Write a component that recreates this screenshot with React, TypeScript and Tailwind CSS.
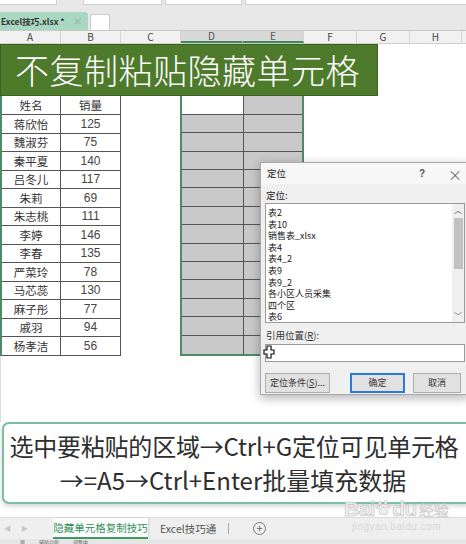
import React from "react";

const rows: [string, string][] = [
  ["蒋欣怡", "125"],
  ["魏淑芬", "75"],
  ["秦平夏", "140"],
  ["吕冬儿", "117"],
  ["朱莉", "69"],
  ["朱志桃", "111"],
  ["李婷", "146"],
  ["李春", "135"],
  ["严菜玲", "78"],
  ["马芯蕊", "130"],
  ["麻子彤", "77"],
  ["戚羽", "94"],
  ["杨孝洁", "56"],
];

const listItems = ["表2", "表10", "销售表_xlsx", "表4", "表4_2", "表9", "表9_2", "各小区人员采集", "四个区", "表6"];

const cols: [string, number][] = [
  ["A", 61],
  ["B", 60],
  ["C", 60],
  ["D", 62],
  ["E", 61],
  ["F", 53],
  ["G", 53],
  ["H", 52],
];

export default function App() {
  return (
    <div
      className="relative w-[466px] h-[544px] overflow-hidden bg-white flex flex-col"
      style={{ fontFamily: '"Noto Sans CJK SC", "Noto Sans", sans-serif' }}
    >
      {/* top toolbar remnant */}
      <div className="h-[13px] bg-[#e8e8e8] flex items-start gap-[3px] shrink-0">
        <div className="w-[57px] h-[5px] bg-white border-b border-r border-[#cfcfcf]" />
        <div className="w-[20px]" />
        <div className="w-[79px] h-[5px] bg-white border-b border-x border-[#cfcfcf]" />
        <div className="w-[77px] h-[5px] bg-white border-b border-x border-[#cfcfcf]" />
        <div className="flex-1 h-[5px] bg-white border-b border-l border-[#cfcfcf]" />
      </div>
      {/* workbook tab row */}
      <div className="h-[18px] bg-[#e8e8e8] flex items-end gap-[2px] border-b border-[#c8c8c8] shrink-0">
        <div className="w-[88px] h-[18px] bg-[#a9d8c2] rounded-tr-[3px] flex items-center pl-[1px] text-[8.5px] text-[#333] font-bold leading-none">
          <span>Excel技巧.xlsx *</span>
          <span className="ml-[8px] text-[#9aa] font-normal text-[10px]">×</span>
        </div>
        <div className="w-[20px] h-[16px] bg-white rounded-t-[3px] border border-[#ccc] border-b-0" />
      </div>
      {/* column headers */}
      <div className="h-[13px] bg-[#f1f1f1] flex shrink-0 border-b border-[#d0d0d0]">
        {cols.map(([c, w]) => (
          <div
            key={c}
            style={{ width: w }}
            className={
              "h-full flex items-center justify-center text-[10px] leading-none border-r border-[#d6d6d6] " +
              (c === "D" || c === "E" ? "bg-[#d8d8d8] text-[#555] border-b-2 border-b-[#3e8a5c]" : "text-[#444]")
            }
          >
            {c}
          </div>
        ))}
        <div className="flex-1" />
      </div>
      {/* title banner */}
      <div className="h-[52px] w-[378px] bg-[#4e7a2c] border border-[#3c5f22] flex items-center pl-[14px] shrink-0">
        <span className="text-white text-[34px] leading-none tracking-[0.5px] font-light">不复制粘贴隐藏单元格</span>
      </div>
      {/* grid */}
      <div className="flex shrink-0 h-[260px]">
        {/* A-B table */}
        <div className="w-[121px] flex flex-col border-l-2 border-[#4f8a67]">
          <div className="flex h-[19px] border-b border-[#555]">
            <div className="w-[59px] border-r border-[#555] flex items-end justify-center text-[11.5px] text-[#333] leading-[17px]">姓名</div>
            <div className="w-[60px] border-r border-[#555] flex items-end justify-center text-[11.5px] text-[#333] leading-[17px]">销量</div>
          </div>
          {rows.map(([n, v]) => (
            <div key={n} className="flex h-[18.5px] border-b border-[#555]">
              <div className="w-[59px] border-r border-[#555] flex items-end justify-center text-[11.5px] text-[#333] leading-[17px]">{n}</div>
              <div
                className="w-[60px] border-r border-[#555] flex items-end justify-center text-[12px] text-[#444] leading-[17px]"
                style={{ fontFamily: '"Liberation Sans", sans-serif' }}
              >
                {v}
              </div>
            </div>
          ))}
          <div className="flex-1" />
        </div>
        {/* C */}
        <div className="w-[59px]" />
        {/* D-E selection */}
        <div className="w-[124px] h-[260px] flex flex-col border-2 border-t-0 border-[#4f8a67]">
          <div className="flex h-[19px] border-b border-[#555]">
            <div className="w-[62px] bg-white border-r border-[#555]" />
            <div className="flex-1 bg-[#c9c9c9]" />
          </div>
          {rows.map(([n]) => (
            <div key={n} className="flex h-[18.5px] border-b border-[#555] last:border-b-0">
              <div className="w-[62px] bg-[#c9c9c9] border-r border-[#555]" />
              <div className="flex-1 bg-[#c9c9c9]" />
            </div>
          ))}
        </div>
        <div className="flex-1" />
      </div>
      {/* empty area */}
      <div className="h-[66px] border-l border-[#ddd] shrink-0" />
      {/* caption */}
      <div className="h-[82px] ml-[2px] mr-[-6px] shrink-0 rounded-[7px] border-2 border-[#79bfa2] bg-white shadow-[0_2px_5px_rgba(0,0,0,0.18)] flex flex-col items-center justify-center text-[#2e2e2e] text-[24px] leading-[34px]">
        <div className="whitespace-nowrap tracking-[-0.2px] pr-[6px]">选中要粘贴的区域→Ctrl+G定位可见单元格</div>
        <div className="whitespace-nowrap pr-[8px]">→=A5→Ctrl+Enter批量填充数据</div>
      </div>
      <div className="h-[13px] shrink-0" />
      {/* sheet tabs */}
      <div className="h-[22px] bg-[#efefef] flex items-stretch shrink-0 border-t border-[#ddd]">
        <div className="w-[53px] flex items-center gap-[10px] pl-[4px] text-[7px] text-[#c8c8c8]">
          <span>◀</span>
          <span>▶</span>
        </div>
        <div className="w-[95px] bg-white border-b-2 border-[#3e9b66] flex items-center justify-center text-[10.5px] text-[#2f8f5a] shadow-[1px_0_2px_rgba(0,0,0,0.12)]">
          隐藏单元格复制技巧
        </div>
        <div className="w-[80px] flex items-center pl-[12px] text-[10.5px] text-[#555]">Excel技巧通</div>
        <div className="w-px my-[5px] bg-[#aaa]" />
        <div className="ml-[24px] flex items-center">
          <div className="w-[13px] h-[13px] rounded-full border border-[#777] flex items-center justify-center text-[11px] leading-none text-[#666]">+</div>
        </div>
      </div>
      {/* status bar */}
      <div className="h-[6px] bg-[#e6e6e6] overflow-hidden flex items-center gap-[14px] pl-[20px] text-[5px] leading-[6px] text-[#666] shrink-0">
        <span>▦</span>
        <span>辅助功能</span>
        <span>调整中</span>
      </div>

      {/* Baidu watermark */}
      <div className="absolute left-[344px] top-[498px] flex flex-col items-center pointer-events-none">
        <div className="flex items-end leading-none whitespace-nowrap">
          <span className="text-[21px] font-bold tracking-[-0.5px]" style={{ fontFamily: '"Liberation Sans", sans-serif', WebkitTextStroke: "0.6px #bdbdbd", color: "rgba(238,238,238,0.9)" }}>Bai</span>
          <svg width="15" height="18" viewBox="0 0 22 24" className="mx-[1px] mb-[2px]">
            <g fill="rgba(238,238,238,0.9)" stroke="#bdbdbd" strokeWidth="1">
              <ellipse cx="6" cy="5" rx="2.3" ry="3" />
              <ellipse cx="14" cy="4" rx="2.3" ry="3" />
              <ellipse cx="3" cy="11" rx="2" ry="2.6" />
              <ellipse cx="18.5" cy="10" rx="2" ry="2.6" />
              <path d="M11 11 C7 11 4 17 5 20 C6 23 9 21 11 21 C13 21 16 23 17 20 C18 17 15 11 11 11 Z" />
            </g>
          </svg>
          <span className="text-[21px] font-bold tracking-[-0.5px]" style={{ fontFamily: '"Liberation Sans", sans-serif', WebkitTextStroke: "0.6px #bdbdbd", color: "rgba(238,238,238,0.9)" }}>du</span>
          <span className="text-[15px] ml-[2px] mb-[2px]" style={{ WebkitTextStroke: "0.5px #c4c4c4", color: "rgba(238,238,238,0.9)" }}>经验</span>
        </div>
        <div className="text-[10px] leading-none mt-[3px] text-[#d6d6d6] tracking-[0.5px] whitespace-nowrap" style={{ fontFamily: '"Liberation Sans", sans-serif' }}>
          jingyan.baidu.com
        </div>
      </div>

      {/* Go To dialog */}
      <div className="absolute left-[260px] top-[162px] w-[210px] h-[233px] bg-[#f0f0f0] border border-[#a9a9a9] shadow-[0_3px_10px_rgba(0,0,0,0.3)] flex flex-col text-[#222]">
        <div className="h-[21px] bg-[#f7f7f7] flex items-center pl-[6px] text-[9.5px]">
          <span className="flex-1">定位</span>
          <span className="w-[10px] text-[10px] font-bold text-[#555]" style={{ fontFamily: '"Liberation Sans", sans-serif' }}>?</span>
          <span className="w-[40px] text-center text-[14px] text-[#444] font-light leading-none pl-[12px]">×</span>
        </div>
        <div className="pl-[5px] pt-[5px] text-[9.5px] leading-[12px]">定位:</div>
        <div className="ml-[4px] mt-[2px] mr-[4px] h-[120px] bg-white border border-[#9a9a9a] flex">
          <div className="flex-1 pl-[2px] pt-[3px] flex flex-col text-[9px] leading-[11.6px]">
            {listItems.map((t) => (
              <div key={t} className="h-[11.6px] overflow-visible">{t}</div>
            ))}
          </div>
          <div className="w-[12px] bg-[#f0f0f0] flex flex-col items-center">
            <div className="h-[12px] text-[8px] leading-[12px] text-[#555]">︿</div>
            <div className="w-[9px] h-[51px] bg-[#c2c2c2] mt-[2px]" />
            <div className="flex-1" />
            <div className="h-[12px] text-[8px] leading-[12px] text-[#555]">﹀</div>
          </div>
        </div>
        <div className="pl-[5px] mt-[6px] text-[9.5px] leading-[12px] text-[#333]">
          引用位置(<span className="underline">R</span>):
        </div>
        <div className="relative ml-[4px] mr-[4px] mt-[3px] h-[18px] bg-white border border-[#9a9a9a]">
          <svg className="absolute -left-[3px] top-[0px]" width="12" height="14" viewBox="0 0 12 14">
            <path d="M4 1 H8 V5 H11 V9 H8 V13 H4 V9 H1 V5 H4 Z" fill="white" stroke="#111" strokeWidth="1.2" />
          </svg>
        </div>
        <div className="flex mt-[11px] ml-[4px] text-[9px]">
          <div className="w-[65px] h-[20px] bg-[#e1e1e1] border border-[#adadad] flex items-center justify-center text-[#333]">定位条件(<span className="underline">S</span>)...</div>
          <div className="w-[55px] h-[20px] ml-[20px] bg-[#e1e1e1] border-2 border-[#2b7ad8] flex items-center justify-center text-[#333]">确定</div>
          <div className="w-[48px] h-[20px] ml-[8px] bg-[#e1e1e1] border border-[#adadad] flex items-center justify-center text-[#333]">取消</div>
        </div>
      </div>
    </div>
  );
}
